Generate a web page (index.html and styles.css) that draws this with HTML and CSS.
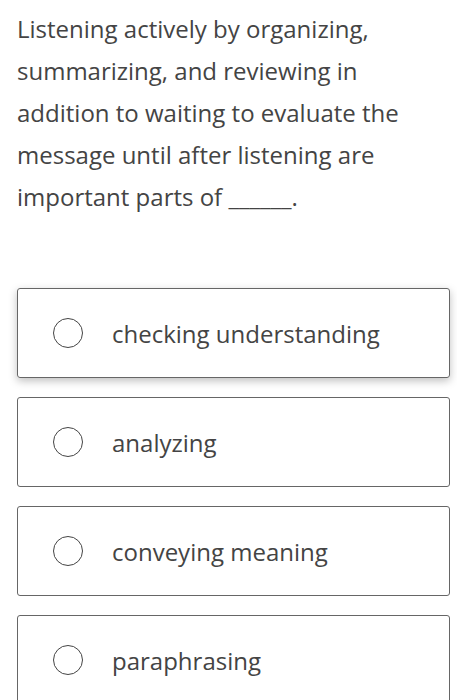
FILE: index.html
```html
<!DOCTYPE html>
<html lang="en">
<head>
  <meta charset="UTF-8" />
  <meta name="viewport" content="width=device-width, initial-scale=1.0"/>
  <title>Question</title>
  <link rel="stylesheet" href="styles.css">
</head>
<body>
  <div class="question">
    Listening actively by organizing, summarizing, and reviewing in addition to waiting to evaluate the message until after listening are important parts of ______.
  </div>

  <div class="options">
    <label class="option focused">
      <span class="radio"></span>
      <span class="text">checking understanding</span>
    </label>
    <label class="option">
      <span class="radio"></span>
      <span class="text">analyzing</span>
    </label>
    <label class="option">
      <span class="radio"></span>
      <span class="text">conveying meaning</span>
    </label>
    <label class="option">
      <span class="radio"></span>
      <span class="text">paraphrasing</span>
    </label>
  </div>
</body>
</html>
```

FILE: styles.css
```css
body {
  margin: 0;
  padding: 0 7px 0 17px;
  background: #fff;
  font-family: 'Open Sans', sans-serif;
  color: #444;
}

.question {
  font-size: 24px;
  line-height: 42px;
  padding-top: 8px;
  padding-right: 50px;
}

.options {
  display: flex;
  flex-direction: column;
  gap: 19px;
  margin-top: 70px;
}

.option {
  display: flex;
  align-items: center;
  height: 90px;
  border: 1px solid #666;
  border-radius: 3px;
  padding-left: 35px;
  box-sizing: border-box;
}

.option.focused {
  box-shadow: 0 3px 8px rgba(0,0,0,0.25);
}

.radio {
  width: 28px;
  height: 28px;
  border: 1.5px solid #444;
  border-radius: 50%;
  flex-shrink: 0;
}

.text {
  font-size: 24px;
  margin-left: 29px;
}
```
